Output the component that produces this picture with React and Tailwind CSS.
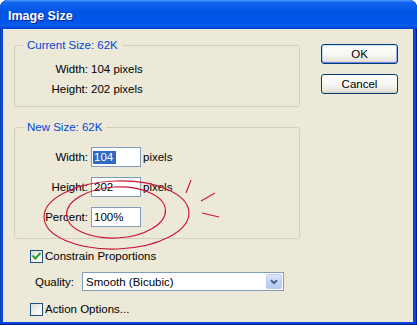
function Checkbox({ checked }) {
  return (
    <span className="w-[13px] h-[13px] shrink-0 border border-[#1c5180] bg-[linear-gradient(135deg,#dcdcd7_0%,#f4f4f2_60%,#ffffff_100%)] flex items-center justify-center">
      {checked && (
        <svg width="9" height="9" viewBox="0 0 9 9">
          <path d="M1.2 4.2 L3.4 6.6 L7.8 1.6" stroke="#21a121" strokeWidth="2" fill="none" strokeLinecap="square" />
        </svg>
      )}
    </span>
  );
}

function Btn({ children, isDefault }) {
  return (
    <div
      className={
        "w-[77px] h-[20px] rounded-[3px] border border-[#003c74] flex items-center justify-center bg-[linear-gradient(180deg,#ffffff_0%,#f6f6f2_55%,#e6e4dc_88%,#d6d0c5_100%)] " +
        (isDefault
          ? "[box-shadow:inset_0_1px_0_#cee7ff,inset_0_-1px_0_#6982ee,inset_1px_0_0_#b8d4fb,inset_-1px_0_0_#90b0f4]"
          : "")
      }
    >
      {children}
    </div>
  );
}

function Field({ label, children }) {
  return (
    <div className="flex items-center h-[20px]">
      <span className="w-[73px] text-right">{label}</span>
      <div className="ml-[3px] flex items-center">{children}</div>
    </div>
  );
}

function Input({ children }) {
  return (
    <div className="w-[50px] h-[20px] border border-[#7f9db9] bg-white pl-[1px] flex items-center">
      {children}
    </div>
  );
}

export default function App() {
  return (
    <div className="relative w-[417px] h-[325px] bg-white font-['Liberation_Sans',Arial,sans-serif] text-[11.5px] leading-[14px] text-black">
      <div className="flex flex-col w-full h-full rounded-t-[8px] overflow-hidden bg-[#0845d8] [box-shadow:inset_0_-1px_0_#001c9c,inset_-1px_0_0_#001c9c,inset_1px_0_0_#0a3fc4]">
        <div className="h-[29px] shrink-0 flex items-center pl-[8px] pt-[2px] bg-[linear-gradient(180deg,#4d9dff_0%,#1466f0_8%,#0055e5_40%,#0157ea_80%,#0a5df0_88%,#0040d2_100%)]">
          <span className="text-white font-bold text-[12.5px] [text-shadow:1px_1px_0_#0a2290]">Image Size</span>
        </div>
        <div className="flex-1 ml-[3px] mr-[4px] mb-[3px] bg-[#ece9d8] flex pl-[11px] pt-[9px]">
          <div className="w-[286px] flex flex-col">
            <fieldset className="border border-[#d0d0bf] rounded-[3px] pt-[7px] pb-[7px]">
              <legend className="ml-[8px] px-[4px] text-[#0046d5] leading-[14px]">Current Size: 62K</legend>
              <Field label="Width:">104 pixels</Field>
              <Field label="Height:">202 pixels</Field>
            </fieldset>
            <fieldset className="mt-[13px] border border-[#d0d0bf] rounded-[3px] pt-[13px] pb-[11px] flex flex-col gap-[10px]">
              <legend className="ml-[8px] px-[4px] text-[#0046d5] leading-[14px]">New Size: 62K</legend>
              <Field label="Width:">
                <Input>
                  <span className="bg-[#316ac5] text-white leading-[13px] px-[1px] pr-[3px]">104</span>
                </Input>
                <span className="ml-[2px]">pixels</span>
              </Field>
              <Field label="Height:">
                <Input>
                  <span className="px-[1px]">202</span>
                </Input>
                <span className="ml-[2px]">pixels</span>
              </Field>
              <Field label="Percent:">
                <Input>
                  <span className="px-[1px]">100%</span>
                </Input>
              </Field>
            </fieldset>
            <div className="mt-[9px] h-[16px] flex items-center pl-[16px]">
              <Checkbox checked />
              <span className="ml-[2px]">Constrain Proportions</span>
            </div>
            <div className="mt-[8px] flex items-center pl-[21px]">
              <span className="w-[47px]">Quality:</span>
              <div className="w-[202px] h-[19px] border border-[#7f9db9] bg-white flex items-center">
                <span className="flex-1 pl-[3px]">Smooth (Bicubic)</span>
                <div className="w-[16px] h-[15px] mr-[1px] rounded-[2px] border border-[#b9cbf3] bg-[linear-gradient(180deg,#dbe6fd_0%,#c4d5fa_50%,#b3c8f5_100%)] flex items-center justify-center">
                  <svg width="8" height="6" viewBox="0 0 8 6">
                    <path d="M1 1.2 L4 4.2 L7 1.2" stroke="#4d6185" strokeWidth="2" fill="none" />
                  </svg>
                </div>
              </div>
            </div>
            <div className="mt-[10px] h-[16px] flex items-center pl-[16px]">
              <Checkbox />
              <span className="ml-[2px]">Action Options...</span>
            </div>
          </div>
          <div className="ml-[21px] mt-[6px] flex flex-col gap-[10px]">
            <Btn isDefault>OK</Btn>
            <Btn>Cancel</Btn>
          </div>
        </div>
      </div>
      <svg className="absolute inset-0 pointer-events-none" width="417" height="325" viewBox="0 0 417 325">
        <g stroke="#cc1233" strokeWidth="1.1" fill="none">
          <ellipse cx="116.5" cy="215" rx="72.5" ry="34" transform="rotate(-2 116.5 215)" />
          <ellipse cx="116" cy="212.5" rx="49.5" ry="25.5" transform="rotate(-3 116 212.5)" />
          <path d="M191 180 L186 193" />
          <path d="M201 201 L215 193" />
          <path d="M202 213 L219 217" />
        </g>
      </svg>
    </div>
  );
}
